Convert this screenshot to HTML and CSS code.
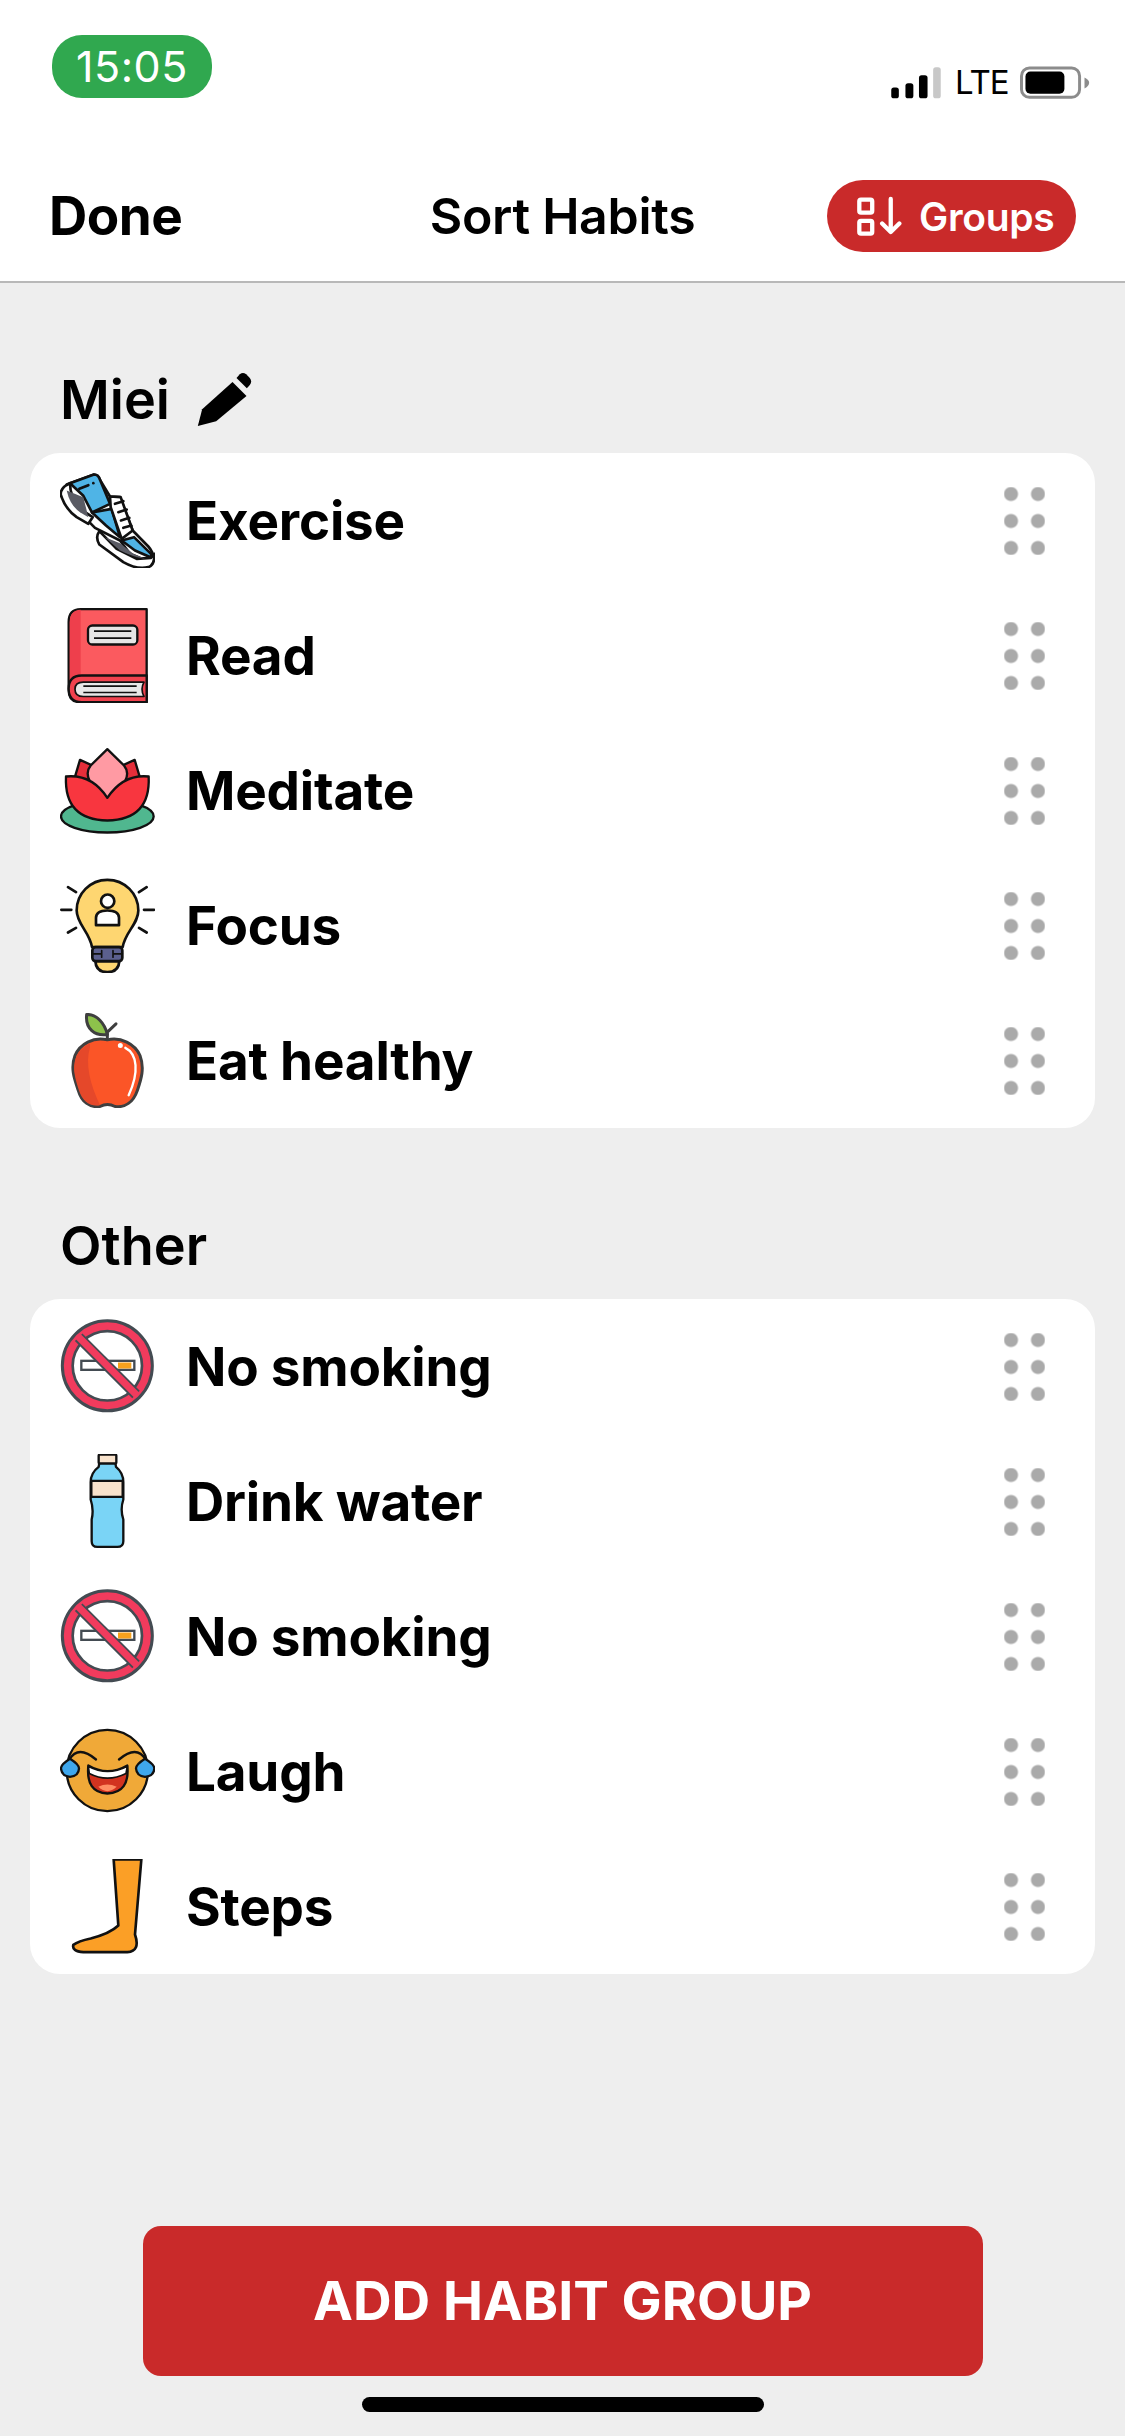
FILE: index.html
```html
<!DOCTYPE html>
<html lang="en">
<head>
<meta charset="utf-8">
<title>Sort Habits</title>
<link rel="stylesheet" href="styles.css">
</head>
<body>
<div class="page">
  <header class="top">
    <div class="status">
      <div class="clock">15:05</div>
      <div class="indicators">
        <svg class="signal" viewBox="40 30 150 100"><rect x="40" y="95" width="23" height="33" rx="8" fill="#000"/><rect x="83" y="82" width="24" height="46" rx="8" fill="#000"/><rect x="124" y="58" width="26" height="70" rx="8" fill="#000"/><rect x="167" y="34" width="23" height="94" rx="8" fill="#c8c8c8"/></svg>
        <span class="lte">LTE</span>
        <svg class="battery" viewBox="425 30 212 100"><rect x="431" y="36" width="176" height="89" rx="24" fill="none" stroke="#8c8c8c" stroke-width="9"/><rect x="443" y="47" width="118" height="67" rx="15" fill="#000"/><path d="M622 65 Q636 72 636 81 Q636 91 622 98Z" fill="#8c8c8c"/></svg>
      </div>
    </div>
    <nav class="nav">
      <div class="done">Done</div>
      <div class="title">Sort Habits</div>
      <div class="groups">
        <svg class="groups-icon" viewBox="75 60 140 130"><g fill="none" stroke="#fff" stroke-width="13"><rect x="87" y="74" width="39" height="39" rx="5"/><rect x="87" y="138" width="39" height="39" rx="5"/><path d="M182 72V172M156 146L182 172L208 146" stroke-linecap="round" stroke-linejoin="round"/></g></svg>
        <span>Groups</span>
      </div>
    </nav>
  </header>

  <main class="main">
    <section class="section">
      <div class="label">
        <span>Miei</span>
        <svg class="pencil" viewBox="525 100 170 165"><path d="M530 262L543 212L634 130L676 172L585 248Z" fill="#000"/><path d="M646 118L656 107Q665 99 675 107L686 118Q694 128 686 139L677 149Z" fill="#000"/></svg>
      </div>
      <div class="card">
        <div class="row">
          <svg class="icon" viewBox="120 397.5 285 285"><g stroke="#111" stroke-width="8" stroke-linejoin="round" stroke-linecap="round">
            <path d="M140 432L222 402Q235 402 240 418L270 468L300 470L338 570L385 618Q405 640 398 668L330 640L300 600L225 562L208 545L150 490Z" fill="#fff"/>
            <path d="M150 428L222 402Q235 402 240 418L270 490L216 516L190 466Z" fill="#4fb4e6"/>
            <path d="M216 516L275 505L300 590L258 555Z" fill="#4fb4e6"/>
            <path d="M305 600L342 590L393 640L395 652L345 630Z" fill="#4fb4e6"/>
            <path d="M270 468L302 470L338 570L305 595L272 500Z" fill="#fff"/>
            <path d="M285 490L310 482M295 515L320 507M303 540L328 532M310 562L334 555" fill="none"/>
            <path d="M150 428Q122 440 122 462Q135 505 170 530L205 550L218 530L180 505Q150 470 150 428Z" fill="#fff"/>
            <path d="M140 450Q150 495 180 515L205 530L190 470Z" fill="#5a5b64" stroke="none"/>
            <path d="M238 572Q225 590 238 612L310 665Q350 688 385 680Q405 672 403 640L393 652L350 655L290 625Z" fill="#fff"/>
            <path d="M255 590L300 630Q335 648 375 655L340 640L300 608Z" fill="#5a5b64" stroke="none"/>
            <path d="M178 445L205 434" fill="none"/>
          </g><circle cx="220" cy="428" r="4" fill="#111"/></svg>
          <span class="name">Exercise</span>
          <span class="grip"></span>
        </div>
        <div class="row">
          <svg class="icon" viewBox="120 802.5 285 285"><g stroke="#111" stroke-width="7" stroke-linejoin="round">
            <path d="M380 806H182Q146 806 146 845V1050Q146 1085 182 1085H380Z" fill="#fb5a5f"/>
            <path d="M149 845Q149 810 182 808V1005H170Q155 1010 149 1025Z" fill="#ee3f4c" stroke="none"/>
            <path d="M380 1005H185Q146 1005 146 1045Q146 1085 185 1085H380Z" fill="#f0424e"/>
            <path d="M372 1025H190Q165 1025 165 1046Q165 1068 190 1068H372Q360 1046 372 1025Z" fill="#e8e8e8" stroke-width="5"/>
            <path d="M190 1037H350M190 1056H350" fill="none" stroke-width="5"/>
            <rect x="204" y="855" width="148" height="57" rx="13" fill="#e6e6e6"/>
            <path d="M222 872H334M222 893H334" fill="none" stroke-width="5"/>
          </g></svg>
          <span class="name">Read</span>
          <span class="grip"></span>
        </div>
        <div class="row">
          <svg class="icon" viewBox="120 67.5 285 285"><g stroke="#111" stroke-width="7" stroke-linejoin="round">
            <ellipse cx="262" cy="288" rx="139" ry="48" fill="#50b78f"/>
            <path d="M163 175L180 118L228 140L205 178Z" fill="#e52e3a"/>
            <path d="M361 175L344 118L296 140L319 178Z" fill="#e52e3a"/>
            <path d="M262 86L312 135Q345 175 262 235Q180 175 212 135Z" fill="#ff9aa3"/>
            <path d="M138 168Q215 160 262 232Q310 160 386 168Q392 298 262 300Q132 298 138 168Z" fill="#f8363f"/>
          </g></svg>
          <span class="name">Meditate</span>
          <span class="grip"></span>
        </div>
        <div class="row">
          <svg class="icon" viewBox="120 472.5 285 285"><g stroke="#111" stroke-width="8" stroke-linejoin="round" stroke-linecap="round">
            <path d="M262 478C315 478 355 520 355 570C355 610 315 635 308 680H216C209 635 170 610 170 570C170 520 210 478 262 478Z" fill="#fed671"/>
            <path d="M226 722Q228 755 262 755Q296 755 298 722Z" fill="#fed671"/>
            <rect x="217" y="680" width="90" height="42" rx="10" fill="#5b5f8e"/>
            <path d="M217 700H245M279 700H307M245 690V710M279 690V710" fill="none" stroke-width="5"/>
            <circle cx="263" cy="542" r="20" fill="#fff"/>
            <path d="M228 614V592Q228 570 262 570Q297 570 297 592V614Z" fill="#fff"/>
            <path d="M124 568H154M372 568H402M144 500L168 515M380 500L357 515M144 636L168 622M380 636L357 622" fill="none"/>
          </g></svg>
          <span class="name">Focus</span>
          <span class="grip"></span>
        </div>
        <div class="row">
          <svg class="icon" viewBox="30 37.5 285 285"><g stroke="#3f3f3f" stroke-width="9" stroke-linejoin="round" stroke-linecap="round">
            <path d="M172 118C130 108 90 130 75 165C60 205 75 240 85 270C95 305 120 322 150 318C165 310 180 310 195 318C225 322 250 305 262 270C272 240 285 205 270 165C255 130 212 108 172 118Z" fill="#fb5527"/>
            <path d="M120 140C105 190 120 250 150 314C120 320 97 302 87 270C78 240 64 205 79 168C88 148 102 138 120 128Z" fill="#e5482a" stroke="none"/>
            <path d="M172 116V95L198 70" fill="none"/>
            <path d="M110 42C140 40 165 70 172 102C135 108 105 85 110 42Z" fill="#8dc24b"/>
            <path d="M226 142C262 160 268 215 236 284" fill="none" stroke="#fff" stroke-width="7"/>
            <circle cx="211" cy="135" r="3" fill="#fff" stroke="#fff"/>
          </g></svg>
          <span class="name">Eat healthy</span>
          <span class="grip"></span>
        </div>
      </div>
    </section>

    <section class="section section-other">
      <div class="label"><span>Other</span></div>
      <div class="card">
        <div class="row">
          <svg class="icon" viewBox="120 88.5 285 285"><g>
            <circle cx="262" cy="229" r="135" fill="#f13b5d" stroke="#434b52" stroke-width="9"/>
            <circle cx="262" cy="229" r="104" fill="#fff" stroke="#434b52" stroke-width="8"/>
            <rect x="184" y="214" width="159" height="27" fill="#fff" stroke="#434b52" stroke-width="7"/>
            <rect x="294" y="219" width="40" height="18" fill="#f7a21d"/>
            <path d="M176 143L348 315" stroke="#434b52" stroke-width="32"/>
            <path d="M172 139L352 319" stroke="#f13b5d" stroke-width="21"/>
          </g></svg>
          <span class="name">No smoking</span>
          <span class="grip"></span>
        </div>
        <div class="row">
          <svg class="icon" viewBox="120 493.5 285 285"><g stroke="#111" stroke-width="7" stroke-linejoin="round">
            <path d="M238 520L236 532Q212 550 212 578V630Q222 660 215 690V755Q215 772 232 772H292Q310 772 310 755V690Q300 660 310 630V578Q310 550 288 532L286 520Z" fill="#7ad4f6"/>
            <rect x="236" y="495" width="53" height="27" rx="4" fill="#f9e3cc"/>
            <rect x="214" y="574" width="94" height="48" fill="#f9e3cc"/>
          </g></svg>
          <span class="name">Drink water</span>
          <span class="grip"></span>
        </div>
        <div class="row">
          <svg class="icon" viewBox="120 88.5 285 285"><g>
            <circle cx="262" cy="229" r="135" fill="#f13b5d" stroke="#434b52" stroke-width="9"/>
            <circle cx="262" cy="229" r="104" fill="#fff" stroke="#434b52" stroke-width="8"/>
            <rect x="184" y="214" width="159" height="27" fill="#fff" stroke="#434b52" stroke-width="7"/>
            <rect x="294" y="219" width="40" height="18" fill="#f7a21d"/>
            <path d="M176 143L348 315" stroke="#434b52" stroke-width="32"/>
            <path d="M172 139L352 319" stroke="#f13b5d" stroke-width="21"/>
          </g></svg>
          <span class="name">No smoking</span>
          <span class="grip"></span>
        </div>
        <div class="row">
          <svg class="icon" viewBox="120 403.5 285 285"><g stroke="#111" stroke-width="7" stroke-linejoin="round" stroke-linecap="round">
            <circle cx="262" cy="543" r="122" fill="#f0a938"/>
            <path d="M148 510Q175 465 228 510" fill="none"/>
            <path d="M297 510Q350 465 377 510" fill="none"/>
            <path d="M205 528Q262 562 322 528Q330 610 262 612Q197 610 205 528Z" fill="#d23320"/>
            <path d="M205 530Q262 562 322 530L318 552Q262 580 208 552Z" fill="#fff" stroke-width="5"/>
            <path d="M235 592Q262 578 290 592Q262 618 235 592Z" fill="#ff8e63" stroke="none"/>
            <path d="M150 508Q123 525 123 537Q125 560 150 562Q176 560 177 537Q177 525 150 508Z" fill="#3fa7ec"/>
            <path d="M375 508Q348 525 348 537Q350 560 375 562Q402 560 403 537Q403 525 375 508Z" fill="#3fa7ec"/>
          </g></svg>
          <span class="name">Laugh</span>
          <span class="grip"></span>
        </div>
        <div class="row">
          <svg class="icon" viewBox="120 808.5 285 285"><g stroke="#111" stroke-width="8" stroke-linejoin="round">
            <path d="M281 810H364L345 1035Q362 1085 322 1088L190 1088Q155 1085 160 1066Q175 1055 212 1047Q270 1032 295 1008Z" fill="#fb9f26"/>
          </g></svg>
          <span class="name">Steps</span>
          <span class="grip"></span>
        </div>
      </div>
    </section>

    <footer class="footer">
      <div class="add">ADD HABIT GROUP</div>
      <div class="home"></div>
    </footer>
  </main>
</div>
</body>
</html>
```
FILE: styles.css
```css
* { box-sizing: border-box; }
html, body { margin: 0; padding: 0; }
body { font-family: Inter, "Liberation Sans", sans-serif; color: #000; background: #eee; }
.page { width: 1125px; height: 2436px; display: flex; flex-direction: column; overflow: hidden; }

.top { background: #fff; height: 283px; border-bottom: 2px solid #b8b8b8; padding: 35px 35px 0 52px; }
.status { display: flex; justify-content: space-between; align-items: flex-start; height: 63px; }
.clock { width: 160px; height: 63px; border-radius: 30px; background: #30a84f; color: #fff; font-size: 43px; letter-spacing: 0.5px; line-height: 63px; text-align: center; }
.indicators { display: flex; align-items: flex-end; margin-top: 31px; height: 33px; }
.signal { width: 50px; height: 33px; }
.lte { font-size: 33px; line-height: 33px; margin-left: 14px; width: 64px; height: 33px; font-weight: 400; letter-spacing: -1px; }
.battery { width: 71px; height: 33px; }

.nav { display: grid; grid-template-columns: 1fr auto 1fr; align-items: center; margin-top: 82px; margin-left: -3px; margin-right: 14px; height: 72px; }
.done { font-size: 53px; font-weight: 700; letter-spacing: -0.5px; }
.title { font-size: 50px; font-weight: 600; letter-spacing: -0.3px; }
.groups { justify-self: end; width: 249px; height: 72px; border-radius: 36px; background: #c92a2a; color: #fff; display: flex; align-items: center; padding-left: 28px; gap: 17px; font-size: 39px; font-weight: 600; letter-spacing: -0.3px; }
.groups-icon { width: 47px; height: 43px; }

.main { flex: 1; display: flex; flex-direction: column; padding: 86px 30px 24px; }
.section-other { margin-top: 87px; }
.label { display: flex; align-items: center; gap: 26px; height: 60px; margin-bottom: 24px; padding-left: 30px; font-size: 54px; font-weight: 600; }
.pencil { width: 57px; height: 55px; }

.card { background: #fff; border-radius: 30px; }
.row { display: flex; align-items: center; height: 135px; padding: 0 50px 0 30px; }
.icon { width: 95px; height: 95px; flex: none; }
.name { flex: 1; margin-left: 31px; font-size: 53px; font-weight: 700; letter-spacing: -0.2px; }
.grip { width: 41px; height: 68px; background: radial-gradient(circle, #aaa 6.5px, transparent 7.5px) -6.5px -6.5px / 27px 27px; }

.footer { margin-top: auto; display: flex; flex-direction: column; align-items: center; }
.add { width: 840px; height: 150px; border-radius: 18px; background: #c92a2a; color: #fff; font-size: 53.5px; font-weight: 700; line-height: 150px; text-align: center; }
.home { width: 402px; height: 15px; border-radius: 8px; background: #000; margin-top: 21px; }
```
